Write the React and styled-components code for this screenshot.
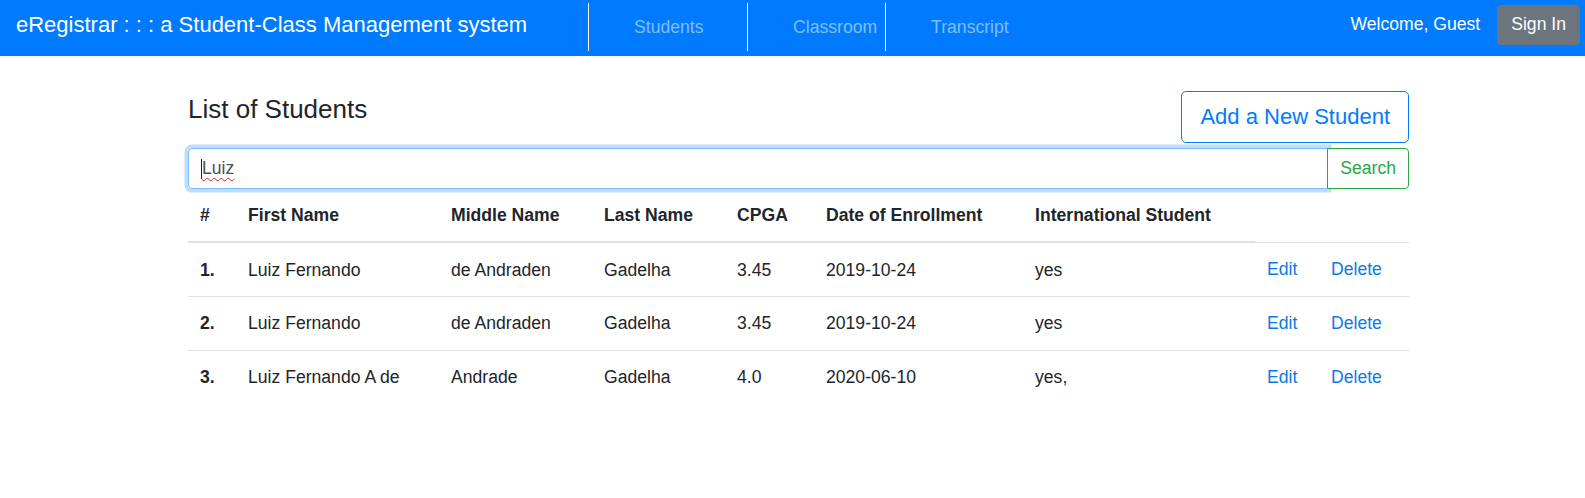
import React from 'react'
import styled, { createGlobalStyle } from 'styled-components'

const GlobalStyle = createGlobalStyle`
  * {
    box-sizing: border-box;
  }

  body {
    margin: 0;
    font-family: 'Liberation Sans', Arial, sans-serif;
    font-size: 17.6px;
    line-height: 1.5;
    color: #212529;
    background: #ffffff;
  }
`

const NavBar = styled.nav`
  height: 56px;
  display: flex;
  align-items: center;
  background: #007bff;
  padding: 0 5px 7px 16px;
`

const Brand = styled.div`
  font-size: 22px;
  line-height: 33px;
  color: #ffffff;
  margin-right: 61px;
  white-space: nowrap;
`

const NavList = styled.div`
  display: flex;
  align-self: stretch;
  padding: 3px 0 0;
  margin-bottom: -2px;
  flex: 1;
`

const NavItem = styled.div`
  width: ${(props) => props.$width || 'auto'};
  display: flex;
  align-items: center;
  padding-left: 45px;
  border-left: 1px solid #ffffff;
  color: #80bdff;
  font-size: 17.6px;
  padding-top: 1px;
`

const Welcome = styled.span`
  color: #ffffff;
  margin-right: 17px;
`

const SignIn = styled.button`
  height: 40px;
  padding: 0 13px;
  border: 1px solid #6c757d;
  border-radius: 4px;
  background: #6c757d;
  color: #ffffff;
  font-family: inherit;
  font-size: 17.6px;
`

const Main = styled.main`
  width: 1409px;
  padding: 35px 0 0 188px;
`

const TitleRow = styled.div`
  display: flex;
  justify-content: space-between;
  align-items: flex-start;
  margin-bottom: 5px;
`

const Title = styled.h3`
  margin: 3px 0 0;
  font-size: 26px;
  font-weight: 400;
  line-height: 1.2;
`

const OutlineButton = styled.button`
  height: ${(props) => props.$height};
  padding: 0 ${(props) => props.$pad};
  border: 1px solid ${(props) => props.$color};
  border-radius: ${(props) => props.$radius || '5px'};
  background: #ffffff;
  color: ${(props) => props.$color};
  font-family: inherit;
  font-size: ${(props) => props.$size || '17.6px'};
  white-space: nowrap;
`

const SearchRow = styled.div`
  display: flex;
`

const SearchField = styled.div`
  flex: 1;
  height: 41px;
  display: flex;
  align-items: center;
  padding: 0 12px;
  border: 1px solid #80bdff;
  border-radius: 4px 0 0 4px;
  box-shadow: 0 0 0 3.5px rgba(0, 123, 255, 0.25);
  color: #495057;
`

const Caret = styled.span`
  width: 1px;
  height: 20px;
  background: #222222;
`

const Typed = styled.span`
  text-decoration: underline wavy #e02020;
  text-decoration-thickness: 1px;
  text-underline-offset: 3px;
`

const SearchButton = styled(OutlineButton)`
  border-radius: 0 4px 4px 0;
  margin-left: -1px;
  position: relative;
`

const Table = styled.table`
  width: 1221px;
  border-collapse: collapse;
  table-layout: fixed;
`

const Col = styled.col`
  width: ${(props) => props.$w}px;
`

const Th = styled.th`
  text-align: left;
  font-weight: 700;
  padding: 13px 12px;
  line-height: 26.4px;
  border-bottom: 2px solid #dee2e6;
  white-space: nowrap;
`

const Td = styled.td`
  padding: 13.2px 12px 13px;
  line-height: 26.4px;
  border-top: 1px solid #dee2e6;
  white-space: nowrap;
  font-weight: ${(props) => (props.$bold ? 700 : 400)};
`

const ActionLink = styled.a`
  color: #0a7ae8;
  text-decoration: none;
  cursor: pointer;
`

const widths = [48, 203, 153, 133, 89, 209, 232, 64, 90]

const headers = [
  '#',
  'First Name',
  'Middle Name',
  'Last Name',
  'CPGA',
  'Date of Enrollment',
  'International Student',
]

const students = [
  ['Luiz Fernando', 'de Andraden', 'Gadelha', '3.45', '2019-10-24', 'yes'],
  ['Luiz Fernando', 'de Andraden', 'Gadelha', '3.45', '2019-10-24', 'yes'],
  ['Luiz Fernando A de', 'Andrade', 'Gadelha', '4.0', '2020-06-10', 'yes,'],
]

const App = () => {
  return (
    <>
      <GlobalStyle />
      <NavBar>
        <Brand>eRegistrar : : : a Student-Class Management system</Brand>
        <NavList>
          <NavItem $width="159px">Students</NavItem>
          <NavItem $width="138px">Classroom</NavItem>
          <NavItem>Transcript</NavItem>
        </NavList>
        <Welcome>Welcome, Guest</Welcome>
        <SignIn>Sign In</SignIn>
      </NavBar>
      <Main>
        <TitleRow>
          <Title>List of Students</Title>
          <OutlineButton
            $height="52px"
            $pad="18px"
            $color="#007bff"
            $size="22px"
            $radius="5px"
          >
            Add a New Student
          </OutlineButton>
        </TitleRow>
        <SearchRow>
          <SearchField>
            <Caret />
            <Typed>Luiz</Typed>
          </SearchField>
          <SearchButton $height="41px" $pad="12px" $color="#28a745">
            Search
          </SearchButton>
        </SearchRow>
        <Table>
          <colgroup>
            {widths.map((w, i) => (
              <Col key={i} $w={w} />
            ))}
          </colgroup>
          <thead>
            <tr>
              {headers.map((h) => (
                <Th key={h}>{h}</Th>
              ))}
            </tr>
          </thead>
          <tbody>
            {students.map((s, i) => (
              <tr key={i}>
                <Td $bold>{i + 1}.</Td>
                {s.map((v, j) => (
                  <Td key={j}>{v}</Td>
                ))}
                <Td>
                  <ActionLink>Edit</ActionLink>
                </Td>
                <Td>
                  <ActionLink>Delete</ActionLink>
                </Td>
              </tr>
            ))}
          </tbody>
        </Table>
      </Main>
    </>
  )
}

export default App
